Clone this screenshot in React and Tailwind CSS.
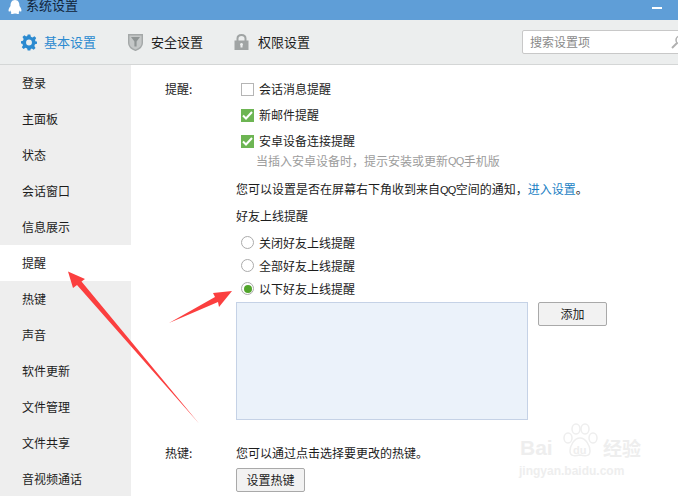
const sideItems = ["登录", "主面板", "状态", "会话窗口", "信息展示", "提醒", "热键", "声音", "软件更新", "文件管理", "文件共享", "音视频通话"];

const Check = ({ checked, label }) => (
  <div className="flex items-center h-[26px] pl-[5px]">
    {checked ? (
      <span className="w-[13px] h-[13px] bg-[#6db553] flex items-center justify-center">
        <svg width="11" height="9" viewBox="0 0 11 9" fill="none">
          <path d="M1 4.5 L4 7.5 L10 1" stroke="#fff" strokeWidth="2" />
        </svg>
      </span>
    ) : (
      <span className="w-[13px] h-[13px] bg-white border border-[#b5b5b5]" />
    )}
    <span className="ml-[5px]">{label}</span>
  </div>
);

const Radio = ({ checked, label }) => (
  <div className="flex items-center h-[23px] pl-[5px]">
    <span className="w-[13px] h-[13px] rounded-full bg-white border border-[#ababab] flex items-center justify-center">
      {checked && <span className="w-[8px] h-[8px] rounded-full bg-[#52a52c]" />}
    </span>
    <span className="ml-[5px]">{label}</span>
  </div>
);

const Button = ({ className, children }) => (
  <button className={"h-[24px] rounded-[2px] border border-[#a9a9a9] bg-[#f2f2f2] text-[12px] text-[#222] " + className}>
    {children}
  </button>
);

const Latin = ({ children }) => <span className="font-['Liberation_Sans'] text-[11px] tracking-[-0.7px]">{children}</span>;

export default function App() {
  return (
    <div
      className="relative w-[678px] h-[496px] overflow-hidden bg-white text-[12px] leading-[16px] text-[#1c1c1c]"
      style={{ fontFamily: '"Noto Sans CJK SC", "Liberation Sans", sans-serif' }}
    >
      {/* title bar */}
      <div className="h-[20px] bg-[#5f9ed7] flex items-center overflow-hidden">
        <svg className="ml-[8px] -mt-[6px]" width="14" height="15" viewBox="0 0 14 15" fill="#fff">
          <path d="M7 0 C10.5 0 11.5 3 11.5 6 C13 8 14 10 13.2 11.5 C12.6 12 12 11 11.6 10.6 C11.4 12 10.6 12.6 10.6 12.6 C11.4 13 11.6 14 10 14 C8.5 14.2 7.6 13.6 7 13.6 C6.4 13.6 5.5 14.2 4 14 C2.4 14 2.6 13 3.4 12.6 C3.4 12.6 2.6 12 2.4 10.6 C2 11 1.4 12 0.8 11.5 C0 10 1 8 2.5 6 C2.5 3 3.5 0 7 0 Z" />
        </svg>
        <span className="ml-[4px] -mt-[11px] text-[13px] text-[#10243a]">系统设置</span>
        <span className="ml-auto mr-[16px] -mt-[4px] w-[10px] h-[2px] bg-white" />
      </div>

      {/* tabs */}
      <div className="h-[45px] bg-[#eceeee] border-b border-[#d4d6d6] flex items-center text-[13px]">
        <svg className="ml-[21px]" width="16" height="17" viewBox="0 0 24 24" fill="#2b8ad0">
          <path fillRule="evenodd" d="M10 0 H14 L14.8 3.4 L17.2 4.4 L20.2 2.6 L22.8 5.4 L21 8.2 L22 10.6 L24 10.6 V14 L21 14.8 L20 17.2 L21.8 20.2 L19 22.8 L16.2 21 L14.4 22 L14 24 H10 L9.2 21 L6.8 20 L3.8 21.8 L1.2 19 L3 16.2 L2 13.8 L0 13.4 V10 L3 9.2 L4 6.8 L2.2 3.8 L5 1.2 L7.8 3 L9.6 2 Z M12 7.6 A4.4 4.4 0 1 0 12 16.4 A4.4 4.4 0 1 0 12 7.6 Z" />
        </svg>
        <span className="ml-[7px] text-[#2b8ad0]">基本设置</span>
        <svg className="ml-[32px]" width="15" height="17" viewBox="0 0 15 17" fill="none">
          <path d="M0.7 0.7 H14.3 V9 C14.3 12.600 11 15 7.500 16.300 C4 15 0.7 12.600 0.7 9 Z" fill="#c4c7c7" stroke="#a4a8a8" strokeWidth="1.400" />
          <path d="M3 3 H12 L8.600 7.500 V12.500 H6.400 V7.500 Z" fill="#8f9494" />
        </svg>
        <span className="ml-[8px]">安全设置</span>
        <svg className="ml-[31px]" width="15" height="16" viewBox="0 0 15 16">
          <path d="M3.5 7 V4.5 C3.5 2 5.3 1 7.5 1 C9.7 1 11.500 2 11.500 4.500 V7" fill="none" stroke="#a0a4a4" strokeWidth="2" />
          <path fillRule="evenodd" d="M0.500 6.500 H14.500 V16 H0.500 Z M7.500 9 A1.500 1.500 0 0 0 6.500 11.600 V13.500 H8.500 V11.600 A1.500 1.500 0 0 0 7.500 9 Z" fill="#a0a4a4" />
        </svg>
        <span className="ml-[9px]">权限设置</span>
        <div className="ml-auto -mr-[20px] w-[176px] h-[24px] bg-white border border-[#c8c8c8] rounded-[2px] flex items-center pl-[7px] text-[12px] text-[#8a8a8a]">
          搜索设置项
          <svg className="ml-auto mr-[12px]" width="14" height="14" viewBox="0 0 14 14" fill="none" stroke="#b0b0b0" strokeWidth="1.500">
            <circle cx="9" cy="5" r="4" />
            <path d="M6 8 L1 13" strokeWidth="2" />
          </svg>
        </div>
      </div>

      <div className="flex h-[431px]">
        {/* sidebar */}
        <div className="w-[131px] shrink-0 bg-[#eeeeee]">
          {sideItems.map((item) => (
            <div key={item} className={"h-[36px] flex items-center pl-[22px] " + (item === "提醒" ? "bg-white" : "")}>
              {item}
            </div>
          ))}
        </div>

        {/* content */}
        <div className="flex-1 flex pl-[34px] pt-[11px]">
          <div className="w-[71px] shrink-0">
            <div className="h-[26px] flex items-center">提醒:</div>
          </div>
          <div className="flex-1">
            <Check label="会话消息提醒" />
            <Check checked label="新邮件提醒" />
            <Check checked label="安卓设备连接提醒" />
            <div className="h-[14px] flex items-center pl-[20px] whitespace-pre text-[#9c9c9c]">
              当插入安卓设备时，提示安装或更新<Latin>QQ</Latin>手机版
            </div>
            <div className="h-[16px] mt-[13px] whitespace-nowrap">
              您可以设置是否在屏幕右下角收到来自<Latin>QQ</Latin>空间的通知，<span className="text-[#1b7fc4]">进入设置</span>。
            </div>
            <div className="h-[16px] mt-[11px]">好友上线提醒</div>
            <div className="mt-[7px]">
              <Radio label="关闭好友上线提醒" />
              <Radio label="全部好友上线提醒" />
              <Radio checked label="以下好友上线提醒" />
            </div>
            <div className="flex mt-[2px]">
              <div className="w-[292px] h-[118px] bg-[#ebf2fa] border border-[#c5d2e6]" />
              <Button className="w-[69px] ml-[10px]">添加</Button>
            </div>
            <div className="h-[16px] mt-[25px]">您可以通过点击选择要更改的热键。</div>
            <Button className="w-[69px] mt-[7px]">设置热键</Button>
          </div>
          <div className="absolute left-[165px] top-[445px]">热键:</div>
        </div>
      </div>

      {/* red annotation arrows */}
      <svg className="absolute left-0 top-0 pointer-events-none" width="678" height="496" viewBox="0 0 678 496" fill="#fb3f3f">
        <path d="M68 271.500 L85 279 L81.500 281.500 L199 423.500 L77 285 L73 288 Z" />
        <path d="M232 291 L213 293 L215 297 L169 323 L218 302 L219 307 Z" />
      </svg>

      {/* watermark */}
      <div className="absolute left-[519px] top-[423px] w-[150px] text-[#eeeeee] pointer-events-none">
        <svg className="absolute left-[42px] top-0" width="38" height="36" viewBox="0 0 38 36" fill="none" stroke="#eeeeee" strokeWidth="1.500">
          <ellipse cx="7" cy="15" rx="4" ry="5" />
          <ellipse cx="15" cy="6" rx="4" ry="5" />
          <ellipse cx="24" cy="6" rx="4" ry="5" />
          <ellipse cx="32" cy="15" rx="4" ry="5" />
          <path d="M19 15 C25 15 29 23 29 28 C29 34 23 33 19 32 C15 33 9 34 9 28 C9 23 13 15 19 15 Z" />
        </svg>
        <div className="flex items-end h-[36px] mt-[1px] font-bold font-['Liberation_Sans']">
          <span className="text-[21px] leading-[24px] w-[44px] ml-[1px]">Bai</span>
          <span className="text-[11px] leading-[20px] w-[36px] pl-[9px]">du</span>
          <span className="text-[19px] leading-[24px] ml-[3px] font-['Noto_Sans_CJK_SC']">经验</span>
        </div>
        <div className="text-[12px] leading-[14px] mt-[4px] font-bold whitespace-nowrap font-['Liberation_Sans']">jingyan.baidu.com</div>
      </div>
    </div>
  );
}
